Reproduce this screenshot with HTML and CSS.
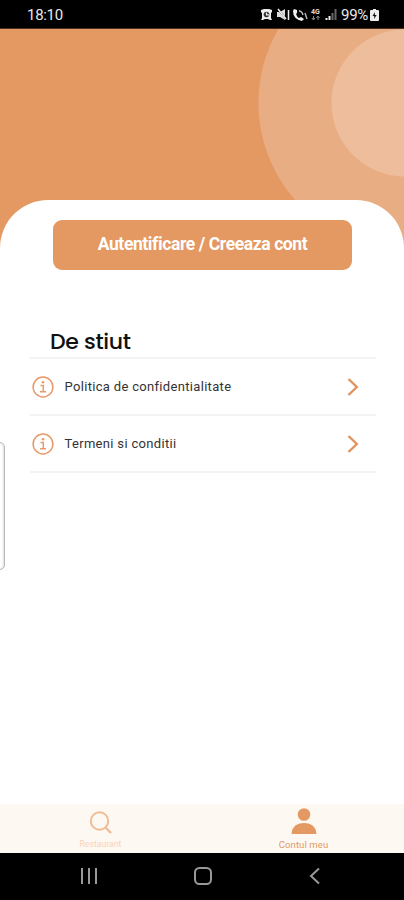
FILE: index.html
```html
<!DOCTYPE html>
<html lang="ro">

<head>
	<meta charset="utf-8">
	<title>Contul meu</title>
	<link rel="stylesheet" href="styles.css">
</head>

<body>
	<div class="status">
		<span class="time">18:10</span>
		<svg class="status-icons" width="78" height="16" viewBox="0 0 78 16">
			<!-- alarm -->
			<path d="M1 3l3-1h5l3 1v2l-1 1v5l1 2h-2l-2-1H5l-2 1H1l1-2V6L1 5z" fill="#eee" />
			<circle cx="6.500" cy="7.500" r="2.800" fill="#333" />
			<path d="M6.500 5.500v2.300H9" fill="none" stroke="#eee" stroke-width="1.200" />
			<!-- muted -->
			<path d="M17 5h3l5-3v11l-5-3h-3z" fill="#ddd" />
			<path d="M17 1l10 12" stroke="#000" stroke-width="1.500" />
			<path d="M18 2l8 10M28.500 3v10" stroke="#eee" stroke-width="1.500" />
			<!-- call -->
			<path d="M34 2l3 1v3l-1 1q1 3 3 4l2-1 3 2-2 2q-9-2-9-10z" fill="#eee" />
			<path d="M39 4q3 0 4 4M45 6l2 6" fill="none" stroke="#bbb" stroke-width="1.400" />
			<text x="51" y="7" class="net">4G</text>
			<path d="M53.500 9v4m-1.500-2l1.500 2 1.500-2M58 13V9m-1.500 2L58 9l1.500 2" fill="none" stroke="#888" />
			<!-- signal -->
			<path d="M66.500 13v-2M69.500 13v-4" stroke="#eee" stroke-width="2" />
			<path d="M72.500 13V6M75.500 13V2" stroke="#666" stroke-width="2" />
		</svg>
		<span class="percent">99%</span>
		<svg width="9" height="14" viewBox="0 0 9 14">
			<path d="M3 1h3v1h2q1 0 1 1v9q0 1-1 1H1q-1 0-1-1V3q0-1 1-1h2z" fill="#eee" />
			<path d="M5 4L2.500 8h1.800L4 11l2.700-4H4.800z" fill="#111" />
		</svg>
	</div>

	<div class="main">
		<div class="sheet">
			<button class="login">Autentificare / Creeaza cont</button>
			<h2>De stiut</h2>
			<div class="list">
				<div class="row">
					<svg class="info" width="22" height="22" viewBox="0 0 22 22">
						<circle cx="11" cy="11" r="9.900" />
						<path d="M8.500 9.500h2.800v6M8 15.700h6" />
						<circle class="dot" cx="11" cy="6.200" r="1.300" />
					</svg>
					<span class="label">Politica de confidentialitate</span>
					<svg class="arrow" width="12" height="20" viewBox="0 0 12 20">
						<path d="M1.500 2l8.300 8-8.300 8" />
					</svg>
				</div>
				<div class="row">
					<svg class="info" width="22" height="22" viewBox="0 0 22 22">
						<circle cx="11" cy="11" r="9.900" />
						<path d="M8.500 9.500h2.800v6M8 15.700h6" />
						<circle class="dot" cx="11" cy="6.200" r="1.300" />
					</svg>
					<span class="label">Termeni si conditii</span>
					<svg class="arrow" width="12" height="20" viewBox="0 0 12 20">
						<path d="M1.500 2l8.300 8-8.300 8" />
					</svg>
				</div>
			</div>
		</div>
		<div class="edge"></div>
	</div>

	<div class="tabs">
		<div class="tab">
			<svg width="24" height="26" viewBox="0 0 24 26">
				<circle cx="10.500" cy="11" r="8.700" fill="none" stroke="#efbc96" stroke-width="2" />
				<path d="M16.500 17.500l5.500 5.500" stroke="#efbc96" stroke-width="2.400" />
			</svg>
			<span class="faded">Restaurant</span>
		</div>
		<div class="tab active">
			<svg width="26" height="28" viewBox="0 0 26 28">
				<circle cx="13" cy="7.500" r="6.300" fill="#e49862" />
				<path d="M.7 27v-1.500C1.500 19 7 16 13 16s11.500 3 12.300 9.500V27z" fill="#e49862" />
			</svg>
			<span>Contul meu</span>
		</div>
	</div>

	<div class="nav">
		<svg width="16" height="18" viewBox="0 0 16 18">
			<path d="M1 1v16M8 1v16M15 1v16" />
		</svg>
		<svg width="18" height="18" viewBox="0 0 18 18">
			<rect x="1" y="1" width="16" height="16" rx="4.500" />
		</svg>
		<svg width="11" height="18" viewBox="0 0 11 18">
			<path d="M10 1.500L2 9l8 7.500" />
		</svg>
	</div>
</body>

</html>
```
FILE: styles.css
```css
html,
body {
	height: 100%;
	margin: 0;
}

body {
	display: flex;
	flex-direction: column;
	background: #fff;
	font-family: Roboto, sans-serif;
	overflow: hidden;
}

svg {
	display: block;
	flex: none;
}

.status {
	display: flex;
	align-items: center;
	box-sizing: border-box;
	height: 29px;
	padding: 2px 25px 0 27px;
	background: #000;
	border-bottom: 1px solid #4a2d1b;
	color: #e8e8e8;
}

.time {
	flex: 1;
	font-size: 15px;
	letter-spacing: -0.3px;
}

.status-icons {
	margin-right: 3px;
}

.net {
	font-size: 7px;
	font-weight: bold;
	fill: #ddd;
}

.percent {
	width: 28px;
	font-size: 15px;
	letter-spacing: -0.3px;
	margin-right: 1px;
}

.main {
	position: relative;
	flex: 1;
	box-sizing: border-box;
	padding-top: 171px;
	background: radial-gradient(circle at 405px 74px, #eebd9b 73px, #e9ad84 74px, #e9ad84 146px, #e49862 147px);
}

.sheet {
	box-sizing: border-box;
	height: 100%;
	padding: 20px 28px 0 30px;
	background: #fff;
	border-radius: 48px 48px 0 0;
}

.login {
	display: block;
	width: 299px;
	height: 50px;
	margin: 0 0 0 23px;
	padding: 0 0 2px;
	background: #e49862;
	border: 0;
	border-radius: 9px;
	color: #fff;
	font: bold 17.5px Roboto, sans-serif;
	letter-spacing: -0.4px;
	white-space: nowrap;
}

h2 {
	margin: 57px 0 0 20px;
	font: 500 22px/30px Poppins, Inter, sans-serif;
	letter-spacing: -0.3px;
	color: #111;
}

.list {
	border-top: 2px solid #f3f3f3;
}

.row {
	display: flex;
	align-items: center;
	height: 55px;
	padding: 0 17px 0 2px;
	border-bottom: 2px solid #f3f3f3;
}

.info {
	fill: none;
	stroke: #e89a68;
	stroke-width: 1.5;
}

.info .dot {
	fill: #e89a68;
	stroke: none;
}

.label {
	flex: 1;
	margin-left: 10.5px;
	font-size: 13px;
	letter-spacing: 0.32px;
	color: #333;
}

.arrow {
	fill: none;
	stroke: #e0935f;
	stroke-width: 2.4;
}

/* side panel handle */
.edge {
	position: absolute;
	left: -8px;
	top: 413px;
	width: 11px;
	height: 126px;
	background: #fff;
	border: 1px solid #bbb;
	border-radius: 5px;
	box-shadow: inset -1px 0 2px #ddd;
}

.tabs {
	display: flex;
	height: 49px;
	background: #fef8f2;
}

.tab {
	display: flex;
	flex: 1;
	flex-direction: column;
	align-items: center;
	justify-content: flex-end;
	font-size: 9.5px;
	letter-spacing: 0.1px;
	line-height: 12px;
	color: #e49862;
}

.tab.active {
	padding-left: 2px;
}

.tab span {
	margin: 4px 0 2px;
}

.tab .faded {
	margin: 2px 0 3px;
	font-size: 8.5px;
	color: #f6d4bc;
}

.nav {
	display: flex;
	align-items: center;
	justify-content: space-between;
	box-sizing: border-box;
	height: 47px;
	padding: 0 84px 1px 81px;
	background: #000;
}

.nav svg {
	fill: none;
	stroke: #999;
	stroke-width: 2;
}
```
